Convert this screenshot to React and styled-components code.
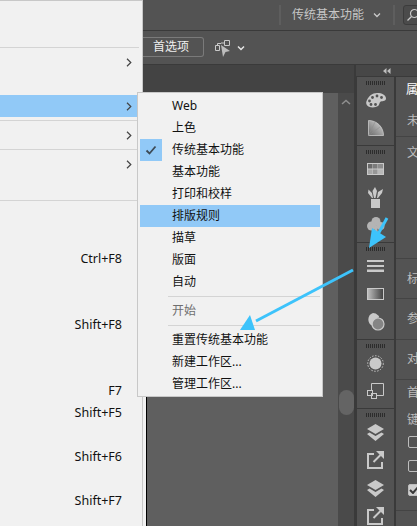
import React from "react";
import styled, { createGlobalStyle } from "styled-components";

const Global = createGlobalStyle`
  html, body { margin: 0; padding: 0; background: #535353; overflow: hidden; }
  * { box-sizing: border-box; }
`;

const Shell = styled.div`
  position: relative;
  width: 417px;
  height: 526px;
  display: grid;
  grid-template-columns: 143px 274px;
  overflow: hidden;
  font: 12px/22px "Noto Sans", "Noto Sans CJK SC", sans-serif;
  color: #111;
`;

const Menu = styled.div`
  height: 526px;
  background: #f1f1f1;
  border-right: 1px solid #c8c8c8;
  box-shadow: inset 0 1px 0 #c8c8c8;
  overflow: hidden;
  font-size: 12.5px;
`;
const MenuRow = styled.div`
  height: 22px;
  display: flex;
  align-items: center;
  justify-content: flex-end;
  padding-right: ${(p) => (p.$arrow ? "10px" : "20px")};
  background: ${(p) => (p.$active ? "#91c9f7" : "transparent")};
`;
const MenuSep = styled.div`
  height: 1px;
  margin: 3px 3px 3px 0;
  background: #d4d4d4;
`;

const Chevron = () => (
  <svg width="6" height="9" viewBox="0 0 6 9" fill="none" stroke="#444" strokeWidth="1.2">
    <path d="M1 .8 4.8 4.5 1 8.2" />
  </svg>
);

const Workspace = styled.div`
  display: flex;
  flex-direction: column;
  height: 526px;
  min-width: 0;
  background: #535353;
`;
const TopBar = styled.div`
  height: 31px;
  flex: none;
  display: flex;
  align-items: center;
  padding-left: 136px;
  background: #535353;
  border-bottom: 1px solid #3a3a3a;
  color: #c4c4c4;
`;
const BarSep = styled.div`
  width: 2px;
  height: 20px;
  flex: none;
  background: #5e5e5e;
  margin-left: ${(p) => p.$left}px;
`;
const WorkspaceName = styled.span`
  margin-left: 11px;
  width: 72px;
  flex: none;
  white-space: nowrap;
  color: #c6c6c6;
`;
const DownIcon = styled.svg`
  flex: none;
  margin-left: ${(p) => p.$left}px;
`;
const SearchBox = styled.div`
  flex: none;
  width: 30px;
  height: 20px;
  margin-left: 8px;
  border: 1px solid #3c3c3c;
  border-radius: 3px;
  background: #4b4b4b;
  display: flex;
  align-items: center;
  padding-left: 2px;
`;
const OptionsBar = styled.div`
  height: 34px;
  flex: none;
  display: flex;
  align-items: center;
  background: #535353;
  border-bottom: 1px solid #3a3a3a;
`;
const PrefButton = styled.div`
  width: 61px;
  height: 20px;
  flex: none;
  margin-top: -1px;
  padding-left: 10px;
  border: 1px solid #7a7a7a;
  border-left: none;
  border-radius: 0 3px 3px 0;
  line-height: 18px;
  color: #efefef;
`;
const TransformIcon = styled.svg`
  flex: none;
  margin-left: 10px;
`;
const MainRow = styled.div`
  flex: 1;
  display: flex;
  min-height: 0;
`;
const DocArea = styled.div`
  width: 211px;
  flex: none;
  display: flex;
  flex-direction: column;
`;
const TabStrip = styled.div`
  height: 28px;
  flex: none;
  background: #434343;
`;
const DocBody = styled.div`
  flex: 1;
  display: flex;
`;
const Canvas = styled.div`
  flex: 1;
  background: #5f5f5f;
  border-left: 3px solid #f1f1f1;
  &::before {
    content: "";
    display: block;
    width: 1px;
    height: 100%;
    background: #000;
  }
`;
const Scroll = styled.div`
  width: 16px;
  flex: none;
  background: #4a4a4a;
  display: flex;
  flex-direction: column;
  align-items: center;
  padding-top: 6px;
`;
const Thumb = styled.div`
  width: 15px;
  height: 25px;
  margin-top: 285px;
  margin-left: 1px;
  border-radius: 8px;
  background: #646464;
`;
const Dock = styled.div`
  flex: 1;
  min-width: 0;
  display: flex;
  flex-direction: column;
  border-left: 2px solid #3a3a3a;
`;
const DockHead = styled.div`
  height: 12px;
  flex: none;
  background: #474747;
  border-bottom: 1px solid #3a3a3a;
  display: flex;
  align-items: center;
  justify-content: center;
`;
const DockBody = styled.div`
  flex: 1;
  display: flex;
  min-height: 0;
`;
const IconColumn = styled.div`
  width: 40px;
  flex: none;
  border-left: 1px solid #3a3a3a;
  border-right: 2px solid #3a3a3a;
`;
const IconGroup = styled.div`
  padding: 3px 0;
  border-bottom: ${(p) => (p.$last ? "none" : "1px solid #3a3a3a")};
`;
const Grip = styled.div`
  width: 19px;
  height: 4px;
  margin: 1px auto;
  background: repeating-linear-gradient(90deg, #2c2c2c 0 1px, transparent 1px 2px);
`;
const IconSlot = styled.div`
  height: 28px;
  display: flex;
  align-items: center;
  justify-content: center;
`;
const Panel = styled.div`
  flex: 1;
  min-width: 0;
  color: #bdbdbd;
  overflow: hidden;
  white-space: nowrap;
`;
const Section = styled.div`
  height: ${(p) => p.$h}px;
  padding: ${(p) => p.$top}px 0 0 11px;
  border-bottom: 1px solid #444;
`;
const Title = styled.div`
  color: #fff;
  height: 22px;
  margin-left: -1px;
`;
const Line = styled.div`
  height: 22px;
  margin-top: ${(p) => p.$mt || 0}px;
`;
const Box = styled.div`
  width: 12px;
  height: 12px;
  margin-top: ${(p) => p.$mt}px;
  margin-left: 1px;
  border: 1px solid #bdbdbd;
  border-radius: 2px;
  background: ${(p) => (p.$on ? "#cfcfcf" : "transparent")};
  display: flex;
  align-items: center;
  justify-content: center;
`;

const Submenu = styled.div`
  position: absolute;
  left: 137px;
  top: 92px;
  width: 186px;
  padding: 2px 2px 1px;
  background: #f1f1f1;
  border: 1px solid #c8c8c8;
`;
const SubRow = styled.div`
  height: 22px;
  display: flex;
  align-items: center;
  padding-left: 32px;
  position: relative;
  background: ${(p) => (p.$active ? "#91c9f7" : "transparent")};
  color: ${(p) => (p.$disabled ? "#6f6f6f" : "#111")};
`;
const CheckMark = styled.div`
  position: absolute;
  left: 0;
  top: 0;
  width: 22px;
  height: 22px;
  background: #91c9f7;
  display: flex;
  align-items: center;
  justify-content: center;
`;
const SubSep = styled.div`
  height: 1px;
  margin: 3px 0 3px 28px;
  background: #d4d4d4;
`;
const Overlay = styled.svg`
  position: absolute;
  left: 0;
  top: 0;
  pointer-events: none;
`;

const C = "#c9c9c9";
const D = "#535353";

const Palette = () => (
  <svg width="20" height="15" viewBox="0 0 20 15">
    <path fill={C} d="M11 0c5 0 9 2 9 5.500 0 2.500-3 2.500-5 3-2 .5-1 3-3 4.500-2 1.500-6 2-9 .8C0 12.500-.5 9.500 1 7 3 3 6 0 11 0Z" />
    <g fill={D}>
      <circle cx="11" cy="3" r="1.400" /><circle cx="15.500" cy="4.500" r="1.400" />
      <circle cx="6.500" cy="4.500" r="1.400" /><circle cx="3.500" cy="8" r="1.400" />
      <circle cx="5" cy="11.500" r="1.400" /><circle cx="9.500" cy="11.500" r="1.400" />
    </g>
  </svg>
);
const ColorGuide = () => (
  <svg width="16" height="16" viewBox="0 0 16 16">
    <defs>
      <linearGradient id="cg" x1="0" y1="1" x2="1" y2="0">
        <stop offset="0" stopColor="#6a6a6a" /><stop offset="1" stopColor="#d8d8d8" />
      </linearGradient>
    </defs>
    <path fill="url(#cg)" stroke={C} strokeWidth=".8" d="M.5 15.500V.5C9 .5 15.500 7 15.500 15.500Z" />
    <path stroke="#8f8f8f" strokeWidth=".6" fill="none" d="M.5 15.500 7 2M.5 15.500 12 7" />
  </svg>
);
const Swatches = () => (
  <svg width="17" height="12" viewBox="0 0 17 12">
    <rect width="17" height="12" fill={C} />
    <rect x="1" y="1" width="4.500" height="4.500" fill="#6a6a6a" />
    <rect x="6" y="1" width="4.500" height="4.500" fill="#7b7b7b" />
    <rect x="11" y="1" width="5" height="4.500" fill="#8d8d8d" />
    <rect x="1" y="6.500" width="4.500" height="4.500" fill="#a6a6a6" />
    <rect x="6" y="6.500" width="4.500" height="4.500" fill="#969696" />
    <rect x="11" y="6.500" width="5" height="4.500" fill="#b8b8b8" />
  </svg>
);
const Brushes = () => (
  <svg width="17" height="22" viewBox="0 0 17 22">
    <rect x="4" y="13" width="9" height="9" fill={C} />
    <path fill={C} d="M7 12 5.500 5 8 1l2 4-1.500 7ZM5 12 1 7l.5-3.500L5 7l1 5ZM10 12l1-6 5-3-1 4-4 5Z" />
  </svg>
);
const Symbols = () => (
  <svg width="18" height="16" viewBox="0 0 18 16">
    <g fill="#b4b4b4">
      <circle cx="9" cy="4.500" r="4.500" /><circle cx="4.500" cy="9" r="4.500" /><circle cx="13.500" cy="9" r="4" />
      <path d="M8 9h2l1 7H7Z" />
    </g>
  </svg>
);
const Lines = () => (
  <svg width="17" height="12" viewBox="0 0 17 12">
    <rect width="17" height="2" fill={C} /><rect y="5" width="17" height="2" fill={C} /><rect y="9.500" width="17" height="2.500" fill={C} />
  </svg>
);
const GradientSwatch = () => (
  <svg width="17" height="12" viewBox="0 0 17 12">
    <defs>
      <linearGradient id="gs"><stop offset="0" stopColor="#c0c0c0" /><stop offset="1" stopColor="#3f3f3f" /></linearGradient>
    </defs>
    <rect x=".5" y=".5" width="16" height="11" fill="url(#gs)" stroke={C} />
  </svg>
);
const Circles = () => (
  <svg width="19" height="18" viewBox="0 0 19 18">
    <circle cx="12" cy="11" r="6" fill="#858585" stroke={C} strokeWidth="1.200" />
    <path fill={C} d="M7 0a7 7 0 0 1 5 2.200c1 .8 1.200 1.500 1.200 2.400a6.800 6.800 0 0 0-6.700 8.400A7 7 0 0 1 7 0Z" />
  </svg>
);
const DashCircle = () => (
  <svg width="17" height="17" viewBox="0 0 17 17">
    <circle cx="8.500" cy="8.500" r="6" fill={C} />
    <circle cx="8.500" cy="8.500" r="7.800" fill="none" stroke={C} strokeDasharray="1.500 1.500" />
  </svg>
);
const Artboard = () => (
  <svg width="17" height="16" viewBox="0 0 17 16">
    <path fill="none" stroke={C} d="M4.500 8V.5h12v12H9" />
    <rect x=".5" y="7.500" width="5" height="5" fill="none" stroke={C} />
    <rect x="4.500" y="10.500" width="5" height="5" fill="none" stroke={C} />
  </svg>
);
const Layers = () => (
  <svg width="17" height="17" viewBox="0 0 17 17">
    <path fill={C} d="M8.500 0 17 5l-8.500 5L0 5Z" />
    <path fill={C} d="m2.500 8.500 6 3.500 6-3.500 2.500 1.500-8.500 7L0 10Z" />
  </svg>
);
const ExportIcon = () => (
  <svg width="17" height="18" viewBox="0 0 17 18">
    <path fill="none" stroke={C} strokeWidth="2" d="M7 3H1v14h14v-6" />
    <path fill="none" stroke={C} strokeWidth="2" d="m6.500 11 7-7" />
    <path fill={C} d="M9 0h8v8Z" />
  </svg>
);

const SMALL_CHEVRON = "M1 1.500 4 4.500 7 1.500";
const leftRows = [
  { b: 1 }, { b: 1 }, { s: 1 }, { arrow: 1 }, { b: 1 }, { arrow: 1, active: 1 }, { s: 1 },
  { arrow: 1 }, { s: 1 }, { arrow: 1 }, { b: 1 }, { s: 1 },
  {}, {}, { t: "Ctrl+F8" }, {}, {}, { t: "Shift+F8" }, {}, {}, { t: "F7" }, { t: "Shift+F5" },
  {}, { t: "Shift+F6" }, {}, { t: "Shift+F7" }, {},
];

const iconGroups = [
  [Palette, ColorGuide],
  [Swatches, Brushes, Symbols],
  [Lines, GradientSwatch, Circles],
  [DashCircle, Artboard],
  [Layers, ExportIcon, Layers, ExportIcon],
];

const subTop = ["Web", "上色", "传统基本功能", "基本功能", "打印和校样", "排版规则", "描草", "版面", "自动"];

export default function App() {
  return (
    <Shell>
      <Global />
      <Menu>
        {leftRows.map((r, i) =>
          r.s ? (
            <MenuSep key={i} />
          ) : (
            <MenuRow key={i} $active={r.active} $arrow={r.arrow}>
              {r.t}
              {r.arrow ? <Chevron /> : null}
            </MenuRow>
          )
        )}
      </Menu>
      <Workspace>
        <TopBar>
          <BarSep $left={0} />
          <WorkspaceName>传统基本功能</WorkspaceName>
          <DownIcon $left={9} width="8" height="6" viewBox="0 0 8 6" fill="none" stroke="#c9c9c9" strokeWidth="1.300">
            <path d={SMALL_CHEVRON} />
          </DownIcon>
          <BarSep $left={12} />
          <SearchBox>
            <svg width="14" height="14" viewBox="0 0 14 14" fill="none" stroke="#c9c9c9" strokeWidth="1.200">
              <circle cx="8.500" cy="5.500" r="4" /><path d="M5.500 8.500 1.500 12.500" />
            </svg>
          </SearchBox>
        </TopBar>
        <OptionsBar>
          <PrefButton>首选项</PrefButton>
          <TransformIcon width="17" height="18" viewBox="0 0 17 18">
            <path fill="none" stroke="#c9c9c9" d="M1.500 6.500h4v5h-4ZM10.500 1.500h5v5h-5ZM7 4h3.500M3.500 6.500V4.500H7" />
            <path fill="#bdbdbd" d="M7 6l9 6-4.500 1L9 18Z" />
          </TransformIcon>
          <DownIcon $left={6} width="8" height="6" viewBox="0 0 8 6" fill="none" stroke="#e6e6e6" strokeWidth="1.500">
            <path d={SMALL_CHEVRON} />
          </DownIcon>
        </OptionsBar>
        <MainRow>
          <DocArea>
            <TabStrip />
            <DocBody>
              <Canvas />
              <Scroll>
                <svg width="10" height="6" viewBox="0 0 10 6" fill="none" stroke="#8f8f8f" strokeWidth="1.500">
                  <path d="M1 5 5 1.500 9 5" />
                </svg>
                <Thumb />
              </Scroll>
            </DocBody>
          </DocArea>
          <Dock>
            <DockHead>
              <svg width="8" height="6" viewBox="0 0 8 6" fill="#bdbdbd">
                <path d="M3.500 0v6L0 3ZM7.500 0v6L4 3Z" />
              </svg>
            </DockHead>
            <DockBody>
              <IconColumn>
                {iconGroups.map((g, i) => (
                  <IconGroup key={i} $last={i === iconGroups.length - 1}>
                    <Grip />
                    {g.map((Icon, j) => (
                      <IconSlot key={j}><Icon /></IconSlot>
                    ))}
                  </IconGroup>
                ))}
              </IconColumn>
              <Panel>
                <Section $h={60} $top={2}>
                  <Title>属性</Title>
                  <Line $mt={9}>未选择对象</Line>
                </Section>
                <Section $h={122} $top={5}>文档</Section>
                <Section $h={40} $top={9}>标尺和网格</Section>
                <Section $h={41} $top={9}>参考线</Section>
                <Section $h={40} $top={8}>对齐选项</Section>
                <Section $h={131} $top={2}>
                  <Line>首选项</Line>
                  <Line $mt={5}>键盘增量</Line>
                  <Box $mt={5} />
                  <Box $mt={12} />
                  <Box $mt={12} $on>
                    <svg width="10" height="8" viewBox="0 0 10 8" fill="none" stroke="#3a3a3a" strokeWidth="2">
                      <path d="M1 4l3 3 5-6" />
                    </svg>
                  </Box>
                </Section>
              </Panel>
            </DockBody>
          </Dock>
        </MainRow>
      </Workspace>

      <Submenu>
        {subTop.map((t) => (
          <SubRow key={t} $active={t === "排版规则"}>
            {t === "传统基本功能" ? (
              <CheckMark>
                <svg width="12" height="10" viewBox="0 0 12 10" fill="none" stroke="#3d4a55" strokeWidth="1.800">
                  <path d="M1.500 5.500 4.500 8.500 10.500 1.500" />
                </svg>
              </CheckMark>
            ) : null}
            {t}
          </SubRow>
        ))}
        <SubSep />
        <SubRow $disabled>开始</SubRow>
        <SubSep />
        <SubRow>重置传统基本功能</SubRow>
        <SubRow>新建工作区...</SubRow>
        <SubRow>管理工作区...</SubRow>
      </Submenu>

      <Overlay width="417" height="526" viewBox="0 0 417 526">
        <g fill="#3dc3fb" stroke="#3dc3fb">
          <path fill="none" strokeWidth="3" d="M387 218 377 236" />
          <path stroke="none" d="M372 228 386 237 369 248Z" />
          <path fill="none" strokeWidth="3" d="M353 270 256 321" />
          <path stroke="none" d="M250 315 255 330 240 330Z" />
        </g>
      </Overlay>
    </Shell>
  );
}
